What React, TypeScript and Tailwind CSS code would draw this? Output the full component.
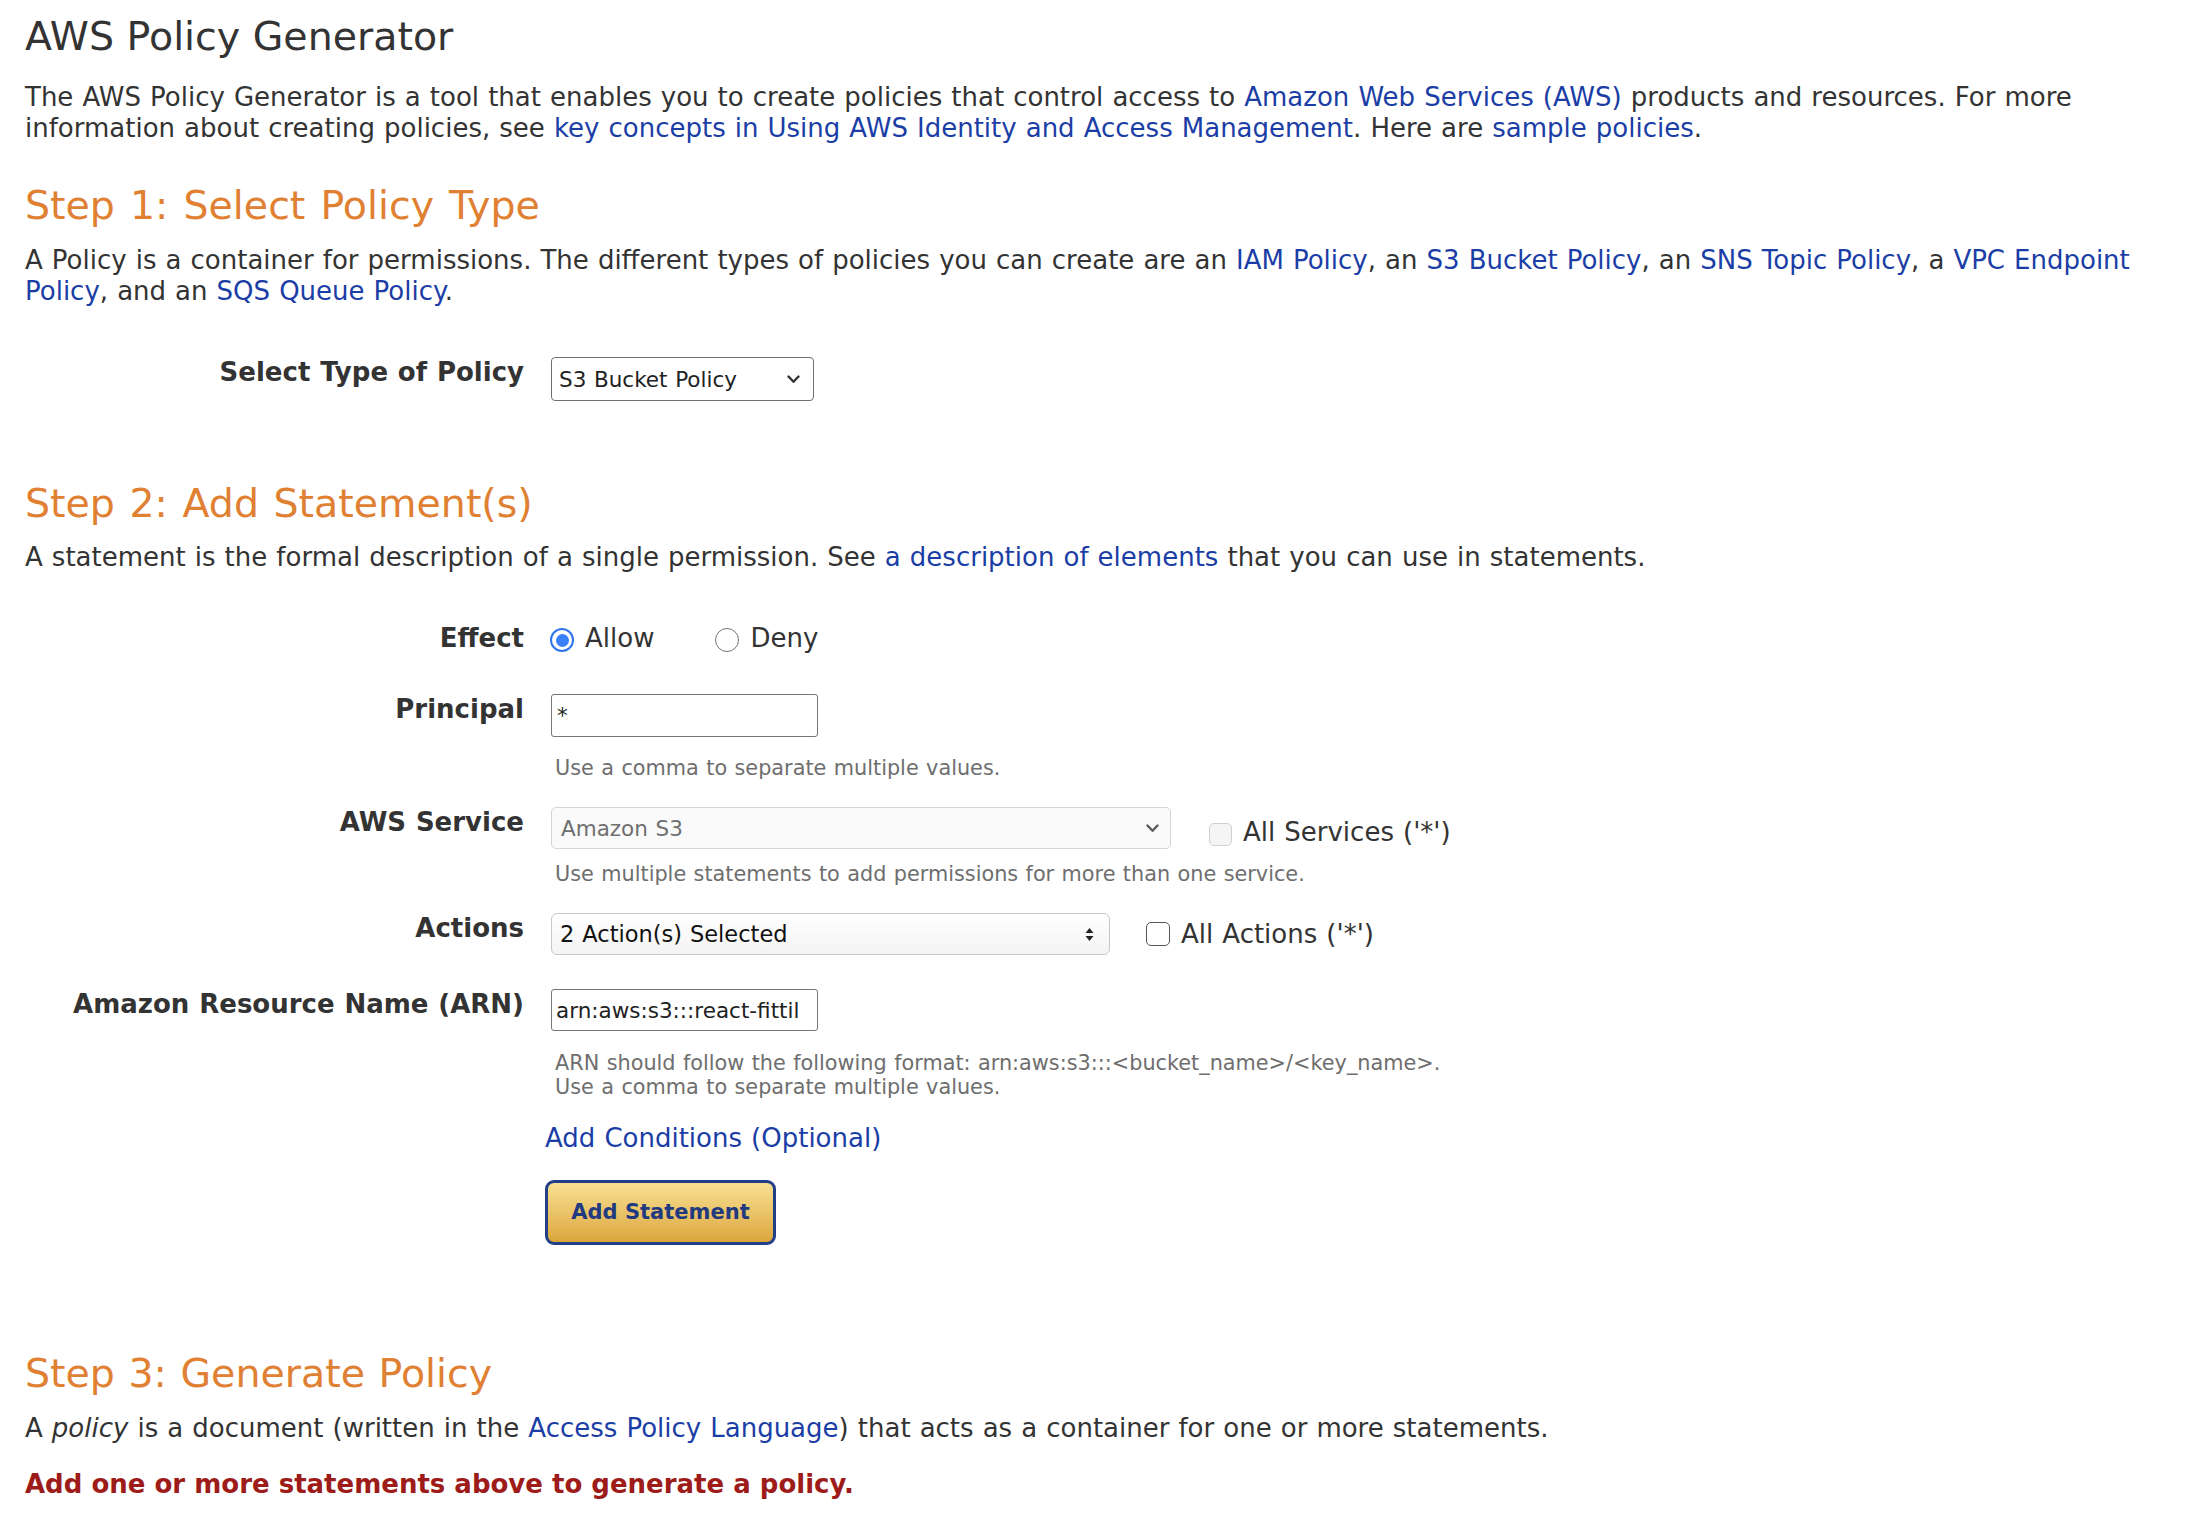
import React from "react";

function Chevron({ color = "#333" }: { color?: string }) {
  return (
    <svg width="13" height="9" viewBox="0 0 13 9" fill="none">
      <path d="M1.5 1.5 L6.5 6.8 L11.5 1.5" stroke={color} strokeWidth="2.4" strokeLinecap="round" strokeLinejoin="round" />
    </svg>
  );
}

function UpDown() {
  return (
    <svg width="9" height="15" viewBox="0 0 9 15">
      <path d="M4.5 1 L8.5 6 L0.5 6 Z" fill="#222" />
      <path d="M4.5 14 L8.5 9 L0.5 9 Z" fill="#222" />
    </svg>
  );
}

const L = "text-[#1b3ea6]";

function Label({ children }: { children: React.ReactNode }) {
  return <div className="w-[499px] shrink-0 text-right font-bold leading-[31px]">{children}</div>;
}

export default function App() {
  return (
    <div className="min-h-[1522px] bg-white text-[#333] px-[25px] text-[26px] leading-[31px] [word-spacing:0.8px] font-['Verdana','DejaVu_Sans',sans-serif]">
      <h1 className="pt-[13px] text-[39.5px] leading-[47px] [word-spacing:0px] font-normal text-[#333]">AWS Policy Generator</h1>

      <p className="mt-[22px] whitespace-nowrap">
        The AWS Policy Generator is a tool that enables you to create policies that control access to{" "}
        <span className={L}>Amazon Web Services (AWS)</span> products and resources. For more
        <br />
        information about creating policies, see{" "}
        <span className={L}>key concepts in Using AWS Identity and Access Management</span>. Here are{" "}
        <span className={L}>sample policies</span>.
      </p>

      <h2 className="mt-[38px] text-[39.5px] leading-[47px] [word-spacing:2.5px] font-normal text-[#df8033]">Step 1: Select Policy Type</h2>

      <p className="mt-[16px] whitespace-nowrap">
        A Policy is a container for permissions. The different types of policies you can create are an{" "}
        <span className={L}>IAM Policy</span>, an <span className={L}>S3 Bucket Policy</span>, an{" "}
        <span className={L}>SNS Topic Policy</span>, a <span className={L}>VPC Endpoint</span>
        <br />
        <span className={L}>Policy</span>, and an <span className={L}>SQS Queue Policy</span>.
      </p>

      <div className="mt-[50px] flex items-start">
        <Label>Select Type of Policy</Label>
        <div className="ml-[27px] flex h-[44px] w-[263px] items-center justify-between rounded-[4px] border-[1.5px] border-[#707070] bg-white pl-[7px] pr-[13px] text-[21.5px] text-[#222]">
          <span>S3 Bucket Policy</span>
          <Chevron color="#333" />
        </div>
      </div>

      <h2 className="mt-[79px] text-[39.5px] leading-[47px] [word-spacing:2px] font-normal text-[#df8033]">Step 2: Add Statement(s)</h2>

      <p className="mt-[15px] whitespace-nowrap">
        A statement is the formal description of a single permission. See{" "}
        <span className={L}>a description of elements</span> that you can use in statements.
      </p>

      <div className="mt-[50px] flex items-start">
        <Label>Effect</Label>
        <div className="ml-[26px] flex h-[31px] items-center">
          <span className="mt-[3px] flex h-[24px] w-[24px] items-center justify-center rounded-full border-[2.5px] border-[#2d74ee] bg-white">
            <span className="h-[13px] w-[13px] rounded-full bg-[#3a80f6]" />
          </span>
          <span className="ml-[11px]">Allow</span>
          <span className="ml-[61px] mt-[3px] h-[24px] w-[24px] rounded-full border-[1.5px] border-[#747474] bg-white" />
          <span className="ml-[11px]">Deny</span>
        </div>
      </div>

      <div className="mt-[40px] flex items-start">
        <Label>Principal</Label>
        <div className="ml-[27px] flex h-[43px] w-[267px] items-center rounded-[3px] border-[1.5px] border-[#767676] bg-white pl-[5px] text-[21.5px] text-[#222]">
          *
        </div>
      </div>

      <div className="mt-[19px] ml-[530px] text-[20.8px] leading-[24px] text-[#6e6e6e]">
        Use a comma to separate multiple values.
      </div>

      <div className="mt-[27px] flex items-start">
        <Label>AWS Service</Label>
        <div className="ml-[27px] flex items-start">
          <div className="flex h-[42px] w-[620px] items-center justify-between rounded-[5px] border-[1.5px] border-[#d6d6d6] bg-[#fafafa] pl-[9px] pr-[11px] text-[21.5px] text-[#6f6f6f]">
            <span>Amazon S3</span>
            <Chevron color="#5a5a5a" />
          </div>
          <div className="ml-[38px] mt-[10px] flex items-center">
            <span className="mt-[3px] h-[23px] w-[23px] rounded-[5px] border-[1.5px] border-[#d0d0d0] bg-[#f5f5f5]" />
            <span className="ml-[11px]">All Services ('*')</span>
          </div>
        </div>
      </div>

      <div className="mt-[13px] ml-[530px] text-[20.8px] leading-[24px] text-[#6e6e6e]">
        Use multiple statements to add permissions for more than one service.
      </div>

      <div className="mt-[27px] flex items-start">
        <Label>Actions</Label>
        <div className="ml-[27px] flex items-center">
          <div className="flex h-[42px] w-[559px] items-center justify-between rounded-[6px] border-[1.5px] border-[#c8c8c8] bg-linear-to-b from-white to-[#f4f4f4] pl-[8px] pr-[15px] text-[22.5px] text-[#111]">
            <span>2 Action(s) Selected</span>
            <UpDown />
          </div>
          <div className="ml-[36px] flex items-center">
            <span className="h-[24px] w-[24px] rounded-[5px] border-[1.5px] border-[#555] bg-white" />
            <span className="ml-[11px]">All Actions ('*')</span>
          </div>
        </div>
      </div>

      <div className="mt-[34px] flex items-start">
        <Label>Amazon Resource Name (ARN)</Label>
        <div className="ml-[27px] flex h-[42px] w-[267px] items-center overflow-hidden whitespace-nowrap rounded-[3px] border-[1.5px] border-[#767676] bg-white pl-[4px] text-[21.5px] text-[#222] [word-spacing:0px]">
          arn:aws:s3:::react-fittil
        </div>
      </div>

      <div className="mt-[20px] ml-[530px] text-[20.8px] leading-[24px] text-[#6e6e6e]">
        ARN should follow the following format: arn:aws:s3:::&lt;bucket_name&gt;/&lt;key_name&gt;.
        <br />
        Use a comma to separate multiple values.
      </div>

      <div className={`mt-[24px] ml-[520px] ${L}`}>Add Conditions (Optional)</div>

      <div className="mt-[26px] ml-[520px] flex h-[65px] w-[231px] items-center justify-center rounded-[9px] border-[3px] border-[#223f88] bg-linear-to-b from-[#f9e192] to-[#dba63a] text-[21px] font-bold text-[#223a80] [word-spacing:0px]">
        Add Statement
      </div>

      <h2 className="mt-[105px] text-[39.5px] leading-[47px] [word-spacing:1px] font-normal text-[#df8033]">Step 3: Generate Policy</h2>

      <p className="mt-[16px] whitespace-nowrap">
        A <em>policy</em> is a document (written in the <span className={L}>Access Policy Language</span>) that acts
        as a container for one or more statements.
      </p>

      <p className="mt-[25px] font-bold text-[#9d1c1a] [word-spacing:0px]">Add one or more statements above to generate a policy.</p>
    </div>
  );
}
